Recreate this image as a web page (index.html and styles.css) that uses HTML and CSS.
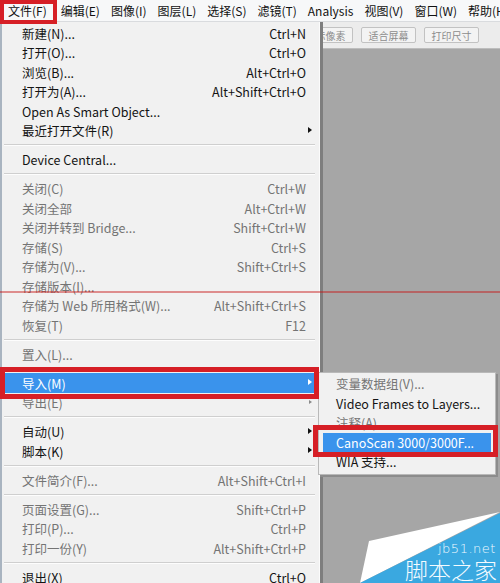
FILE: index.html
```html
<!DOCTYPE html>
<html lang="zh-CN">
<head>
<meta charset="utf-8">
<title>Photoshop 文件菜单</title>
<link rel="stylesheet" href="styles.css">
</head>
<body>
<div class="app">
  <div class="menubar">
    <span class="mb-item first">文件(F)</span>
    <span class="mb-item">编辑(E)</span>
    <span class="mb-item">图像(I)</span>
    <span class="mb-item">图层(L)</span>
    <span class="mb-item">选择(S)</span>
    <span class="mb-item">滤镜(T)</span>
    <span class="mb-item">Analysis</span>
    <span class="mb-item">视图(V)</span>
    <span class="mb-item">窗口(W)</span>
    <span class="mb-item">帮助(H)</span>
  </div>
  <div class="toolbar">
    <span class="tb-btn">实际像素</span>
    <span class="tb-btn">适合屏幕</span>
    <span class="tb-btn">打印尺寸</span>
  </div>
  <div class="canvas"></div>
</div>

<div class="menu">
  <div class="item"><span class="label">新建(N)...</span><span class="key">Ctrl+N</span></div>
  <div class="item"><span class="label">打开(O)...</span><span class="key">Ctrl+O</span></div>
  <div class="item"><span class="label">浏览(B)...</span><span class="key">Alt+Ctrl+O</span></div>
  <div class="item"><span class="label">打开为(A)...</span><span class="key">Alt+Shift+Ctrl+O</span></div>
  <div class="item"><span class="label">Open As Smart Object...</span></div>
  <div class="item sub"><span class="label">最近打开文件(R)</span></div>
  <div class="sep"></div>
  <div class="item"><span class="label">Device Central...</span></div>
  <div class="sep"></div>
  <div class="item off"><span class="label">关闭(C)</span><span class="key">Ctrl+W</span></div>
  <div class="item off"><span class="label">关闭全部</span><span class="key">Alt+Ctrl+W</span></div>
  <div class="item off"><span class="label">关闭并转到 Bridge...</span><span class="key">Shift+Ctrl+W</span></div>
  <div class="item off"><span class="label">存储(S)</span><span class="key">Ctrl+S</span></div>
  <div class="item off"><span class="label">存储为(V)...</span><span class="key">Shift+Ctrl+S</span></div>
  <div class="item off"><span class="label">存储版本(I)...</span></div>
  <div class="item off"><span class="label">存储为 Web 所用格式(W)...</span><span class="key">Alt+Shift+Ctrl+S</span></div>
  <div class="item off"><span class="label">恢复(T)</span><span class="key">F12</span></div>
  <div class="sep"></div>
  <div class="item off"><span class="label">置入(L)...</span></div>
  <div class="sep"></div>
  <div class="item sub active"><span class="label">导入(M)</span></div>
  <div class="item sub off"><span class="label">导出(E)</span></div>
  <div class="sep"></div>
  <div class="item sub"><span class="label">自动(U)</span></div>
  <div class="item sub"><span class="label">脚本(K)</span></div>
  <div class="sep"></div>
  <div class="item off"><span class="label">文件简介(F)...</span><span class="key">Alt+Shift+Ctrl+I</span></div>
  <div class="sep"></div>
  <div class="item off"><span class="label">页面设置(G)...</span><span class="key">Shift+Ctrl+P</span></div>
  <div class="item off"><span class="label">打印(P)...</span><span class="key">Ctrl+P</span></div>
  <div class="item off"><span class="label">打印一份(Y)</span><span class="key">Alt+Shift+Ctrl+P</span></div>
  <div class="sep"></div>
  <div class="item"><span class="label">退出(X)</span><span class="key">Ctrl+Q</span></div>
</div>

<div class="submenu">
  <div class="item off"><span class="label">变量数据组(V)...</span></div>
  <div class="item"><span class="label">Video Frames to Layers...</span></div>
  <div class="item off"><span class="label">注释(A)...</span></div>
  <div class="item active"><span class="label">CanoScan 3000/3000F...</span></div>
  <div class="item"><span class="label">WIA 支持...</span></div>
</div>

<div class="mark mark-file"></div>
<div class="mark mark-import"></div>
<div class="mark mark-scan"></div>
<div class="guide"></div>

<div class="watermark">
  <svg class="wm-shape" width="140" height="72" viewBox="0 0 140 72">
    <polygon points="9,30 140,1 0,72" fill="#ffffff"/>
    <polygon points="0,72 140,2 140,72" fill="#3aa8e0"/>
  </svg>
  <span class="wm-url">jb51.net</span>
  <span class="wm-name">脚本之家</span>
</div>
</body>
</html>
```

FILE: styles.css
```css
* { box-sizing: border-box; }

html, body {
  margin: 0;
  padding: 0;
}

body {
  width: 500px;
  height: 583px;
  overflow: hidden;
  position: relative;
  font-family: "Noto Sans CJK SC", "Noto Sans", sans-serif;
  font-size: 12.5px;
  color: #111;
}

.app {
  display: flex;
  flex-direction: column;
  height: 583px;
}

.menubar {
  height: 22px;
  flex: none;
  display: flex;
  align-items: center;
  gap: 11px;
  padding-left: 8px;
  background: #f7f8f9;
  border-bottom: 1px solid #d9dbde;
  white-space: nowrap;
  overflow: hidden;
  font-size: 12px;
  color: #111;
}

.mb-item.first {
  margin-right: 3px;
}

.toolbar {
  height: 27px;
  flex: none;
  display: flex;
  align-items: center;
  gap: 8px;
  padding-left: 298px;
  background: #ececec;
  border-bottom: 1px solid #bdbdbd;
}

.tb-btn {
  width: 55px;
  height: 16px;
  display: flex;
  align-items: center;
  justify-content: center;
  font-size: 10px;
  color: #8c8c8c;
  background: #f3f3f3;
  border: 1px solid #c2c2c2;
  border-radius: 2px;
}

.canvas {
  flex: 1;
  background: #a6a6a6;
}

/* dropdown menu */
.menu {
  position: absolute;
  left: 0;
  top: 22px;
  width: 320px;
  padding-top: 1.25px;
  background: #f1f1f1;
  border-left: 2px solid #a9b4c0;
  border-right: 1px solid #fbfbfb;
  box-shadow: 3px 0 0 #7e7e7e;
}

.item {
  position: relative;
  height: 19.5px;
  display: flex;
  align-items: center;
  justify-content: space-between;
  padding: 0 13px 0 20px;
  white-space: nowrap;
  color: #141414;
}

.item.off {
  color: #747474;
}

.item.sub::after {
  content: "";
  position: absolute;
  right: 7px;
  top: 6px;
  border-left: 4px solid #111;
  border-top: 3.5px solid transparent;
  border-bottom: 3.5px solid transparent;
}

.item.sub.off::after {
  border-left-color: #8a8a8a;
  border-left-width: 3px;
  border-top-width: 2.5px;
  border-bottom-width: 2.5px;
  top: 7px;
}

.menu .item.active {
  background: #3a93ec;
  color: #fff;
  margin: 0 4px 0 2px;
  padding-left: 18px;
}

.menu .item.active::after {
  border-left-color: #fff;
  right: 3px;
}

.sep {
  height: 9.5px;
  margin: 0 4px 0 2px;
  position: relative;
}

.sep::before {
  content: "";
  position: absolute;
  left: 0;
  right: 0;
  top: 4px;
  border-top: 1px solid #cfcfcf;
  border-bottom: 1px solid #fdfdfd;
}

/* submenu */
.submenu {
  position: absolute;
  left: 318px;
  top: 372px;
  width: 178px;
  padding: 1px 0 2px;
  background: #f1f1f1;
  border: 1px solid #b9b9b9;
  box-shadow: 2px 2px 0 #8c8c8c;
}

.submenu .item {
  padding-left: 17px;
}

.submenu .item.active {
  background: #3a93ec;
  color: #fff;
  margin: 0 4px;
  padding-left: 13px;
}

/* annotation overlays */
.mark {
  position: absolute;
  border: 4px solid #d61f26;
  z-index: 5;
}

.mark-file {
  left: 0;
  top: 0;
  width: 57px;
  height: 24px;
}

.mark-import {
  left: 0;
  top: 367px;
  width: 319px;
  height: 32px;
  border-width: 5px;
}

.mark-scan {
  left: 313px;
  top: 425px;
  width: 185px;
  height: 32px;
  border-width: 5px;
}

.guide {
  position: absolute;
  left: 0;
  top: 291px;
  width: 500px;
  height: 2px;
  background: rgba(200, 20, 20, 0.45);
  z-index: 6;
}

/* watermark */
.watermark {
  position: absolute;
  right: 0;
  bottom: 0;
  width: 140px;
  height: 72px;
  overflow: hidden;
  z-index: 4;
}

.wm-shape {
  position: absolute;
  left: 0;
  top: 0;
  display: block;
}

.wm-url {
  position: absolute;
  left: 78px;
  top: 30px;
  font-family: "DejaVu Sans", sans-serif;
  font-size: 13px;
  font-weight: 300;
  color: #eef8ff;
  letter-spacing: 0.5px;
}

.wm-name {
  position: absolute;
  left: 45px;
  top: 44px;
  font-size: 23px;
  line-height: 28px;
  font-weight: 300;
  color: #f4fbff;
  white-space: nowrap;
}
```
